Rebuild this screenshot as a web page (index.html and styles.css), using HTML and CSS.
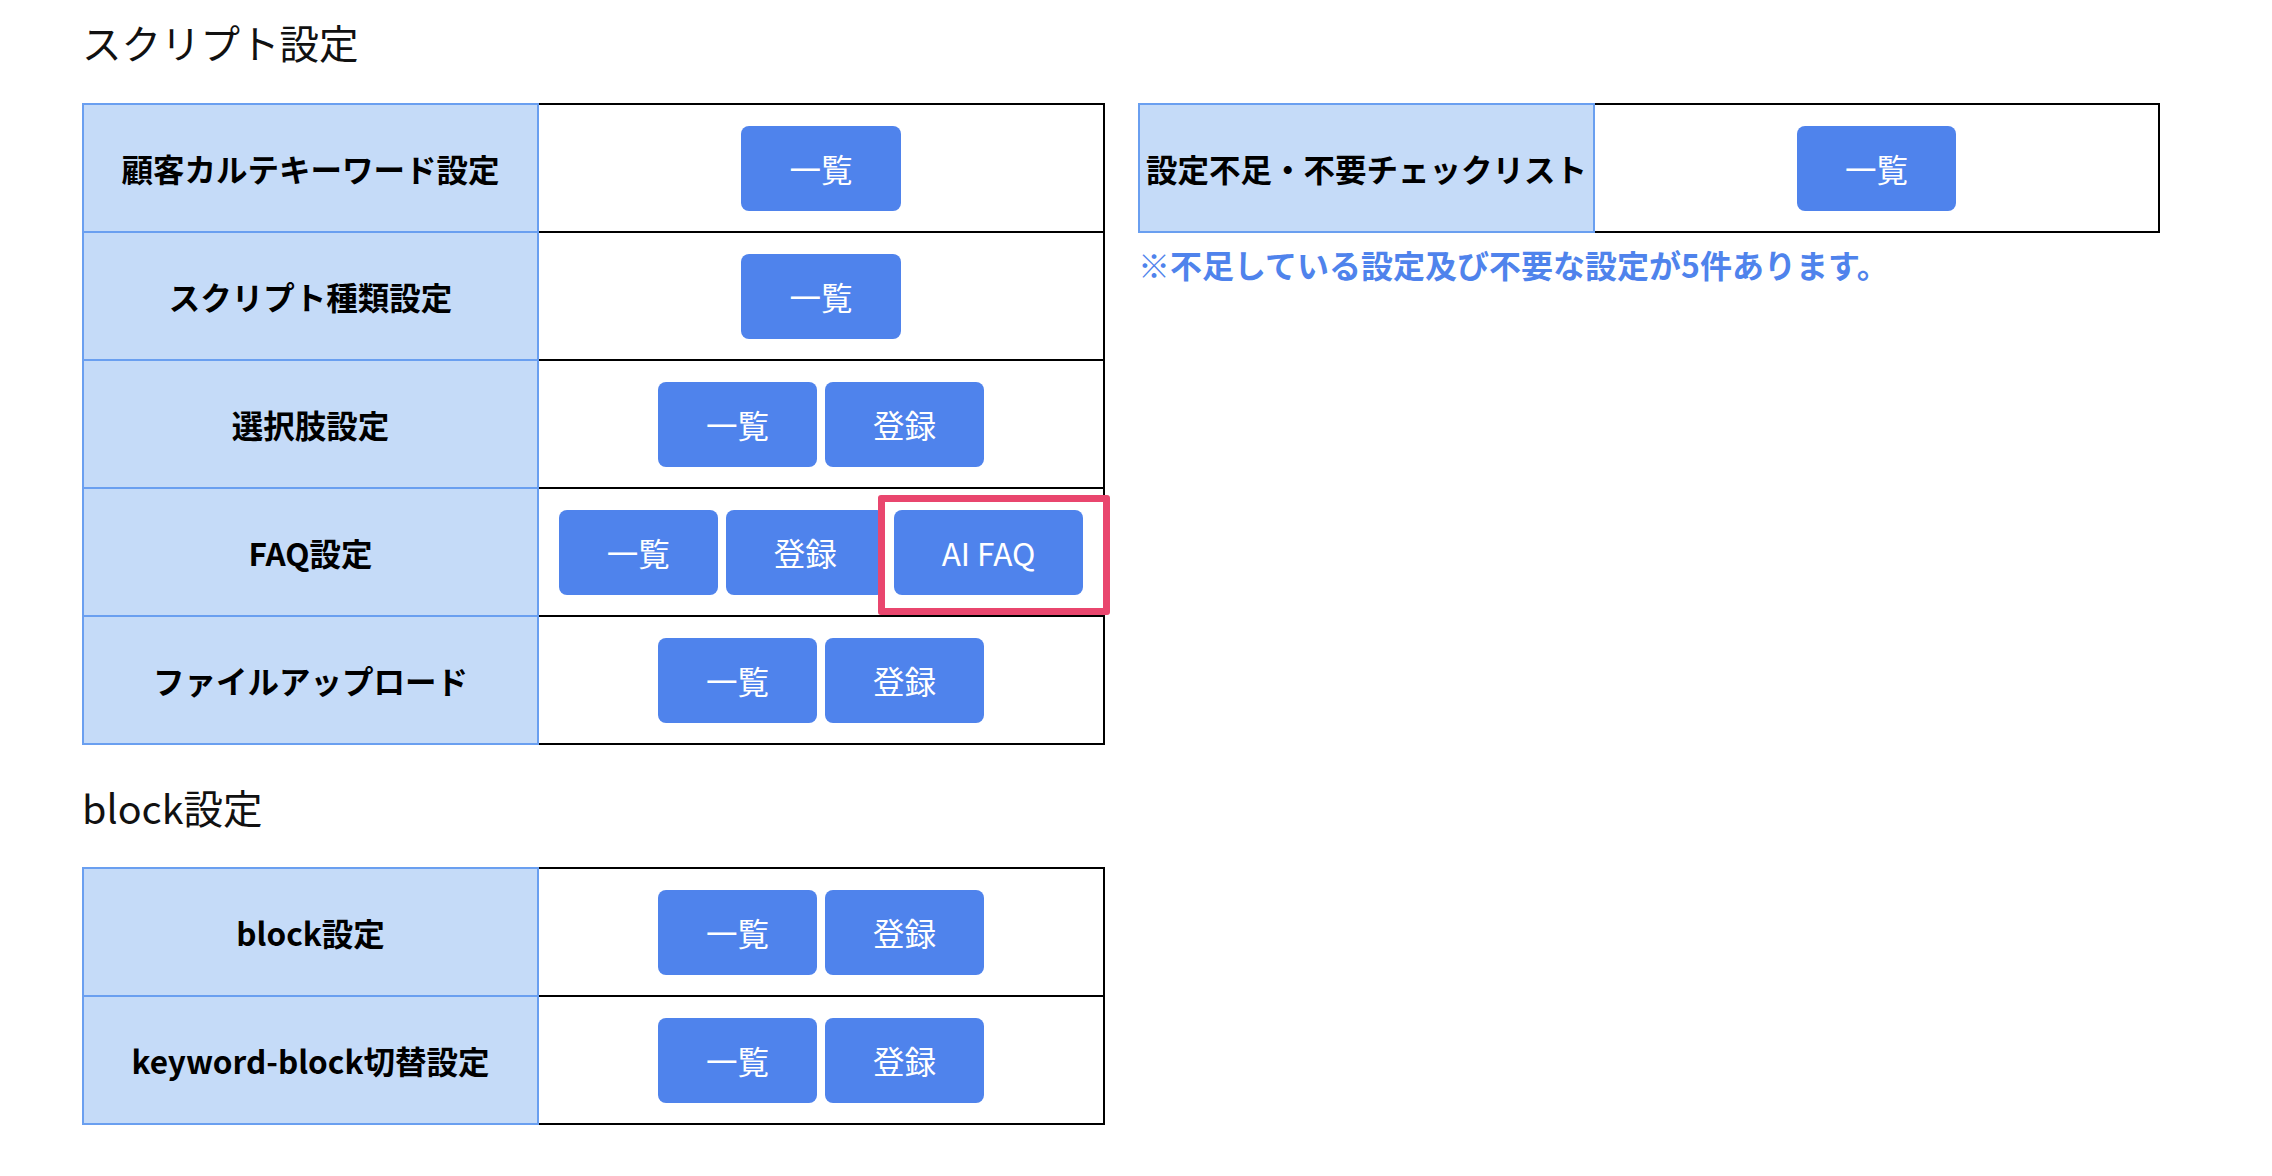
FILE: index.html
```html
<!DOCTYPE html>
<html lang="ja">
<head>
    <meta charset="utf-8">
    <title>スクリプト設定</title>
    <link rel="stylesheet" href="styles.css">
</head>
<body>
    <div class="container">
        <h2 class="section-title">スクリプト設定</h2>
        <div class="columns">
            <table class="settings-table">
                <tr>
                    <th>顧客カルテキーワード設定</th>
                    <td><div class="btn-group"><button class="btn">一覧</button></div></td>
                </tr>
                <tr>
                    <th>スクリプト種類設定</th>
                    <td><div class="btn-group"><button class="btn">一覧</button></div></td>
                </tr>
                <tr>
                    <th>選択肢設定</th>
                    <td><div class="btn-group"><button class="btn">一覧</button><button class="btn">登録</button></div></td>
                </tr>
                <tr>
                    <th>FAQ設定</th>
                    <td>
                        <div class="btn-group">
                            <button class="btn">一覧</button>
                            <button class="btn">登録</button>
                            <span class="highlight-wrap">
                                <button class="btn">AI FAQ</button>
                                <span class="highlight"></span>
                            </span>
                        </div>
                    </td>
                </tr>
                <tr>
                    <th>ファイルアップロード</th>
                    <td><div class="btn-group"><button class="btn">一覧</button><button class="btn">登録</button></div></td>
                </tr>
            </table>

            <div class="side">
                <table class="settings-table">
                    <tr>
                        <th>設定不足・不要チェックリスト</th>
                        <td><div class="btn-group"><button class="btn">一覧</button></div></td>
                    </tr>
                </table>
                <p class="notice">※不足している設定及び不要な設定が5件あります。</p>
            </div>
        </div>

        <h2 class="section-title block-title">block設定</h2>
        <table class="settings-table">
            <tr>
                <th>block設定</th>
                <td><div class="btn-group"><button class="btn">一覧</button><button class="btn">登録</button></div></td>
            </tr>
            <tr>
                <th>keyword-block切替設定</th>
                <td><div class="btn-group"><button class="btn">一覧</button><button class="btn">登録</button></div></td>
            </tr>
        </table>
    </div>
</body>
</html>
```

FILE: styles.css
```css
body {
    font-family: "Noto Sans CJK JP", "Noto Sans", sans-serif;
    background-color: #fff;
    color: #000;
    margin: 0;
    padding: 0;
}

.container {
    padding: 18px 0 40px 82px;
}

.section-title {
    margin: 0 0 38px;
    font-size: 39.5px;
    font-weight: normal;
    line-height: 47px;
    color: #111;
}

.block-title {
    margin-top: 38px;
    margin-bottom: 37px;
}

.columns {
    display: flex;
    align-items: flex-start;
    gap: 33px;
}

.side {
    width: 1022px;
}

.settings-table {
    width: 1023px;
    border-collapse: collapse;
    table-layout: fixed;
}

.side .settings-table {
    width: 1022px;
}

th, td {
    height: 126px;
    padding: 0;
}

th {
    width: 445px;
    padding: 0 4px;
    background-color: #c5dbf8;
    border: 2px solid #6a9ff0;
    font-size: 31.5px;
    font-weight: bold;
    text-align: center;
    white-space: nowrap;
}

td {
    border: 2px solid #000;
}

.btn-group {
    display: flex;
    justify-content: center;
    align-items: center;
    gap: 8px;
}

.btn {
    height: 85px;
    padding: 0 48px;
    font-family: inherit;
    font-size: 31.5px;
    color: #fff;
    background-color: #4f83ec;
    border: none;
    border-radius: 8px;
    cursor: pointer;
}

.highlight-wrap {
    position: relative;
    display: inline-flex;
    margin-left: 1px;
}

.highlight {
    position: absolute;
    top: -15px;
    right: -27px;
    bottom: -20px;
    left: -16px;
    border: 7px solid #e9466e;
    border-radius: 3px;
    pointer-events: none;
}

.notice {
    margin: 7px 0 0;
    font-size: 32px;
    line-height: 48px;
    font-weight: bold;
    color: #4f83ec;
}
```
